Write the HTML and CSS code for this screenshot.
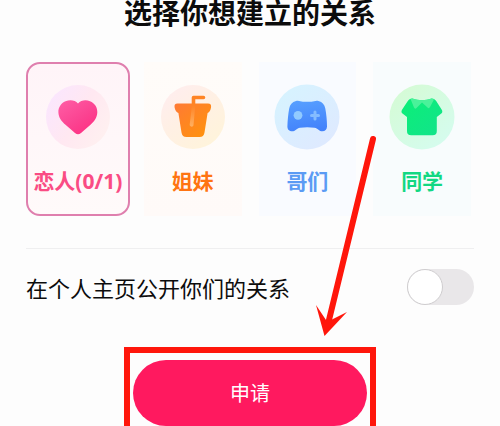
FILE: index.html
```html
<!DOCTYPE html>
<html lang="zh-CN">
<head>
<meta charset="utf-8">
<meta name="viewport" content="width=device-width, initial-scale=1">
<title>选择关系</title>
<link rel="stylesheet" href="styles.css">
</head>
<body>
<main class="page">
  <h1 class="title">选择你想建立的关系</h1>

  <div class="cards">
    <button type="button" class="card card-love" aria-pressed="true">
      <svg class="icon" viewBox="0 0 66 66" aria-hidden="true">
        <defs>
          <linearGradient id="love-bg" x1="0" y1="0.2" x2="1" y2="0.8"><stop offset="0" stop-color="#fae6ff"/><stop offset="0.5" stop-color="#ffe8f1"/><stop offset="1" stop-color="#fff1f0"/></linearGradient>
          <linearGradient id="love" x1="0" y1="0" x2="0.8" y2="1"><stop offset="0" stop-color="#ff5ea6"/><stop offset="0.6" stop-color="#fb4391"/><stop offset="1" stop-color="#ff2f82"/></linearGradient>
        </defs>
        <circle cx="33" cy="33" r="32" fill="url(#love-bg)"/>
        <path fill="url(#love)" d="M33 19.500C36 16 41 15.600 45 17.200C50 19.200 52.500 23.500 52.300 28.500C52 34 49 37.500 45.500 40.800L36 49C34 50.700 32 50.700 30 49L20.500 40.800C16.500 37.200 13.600 33.500 13.400 28.500C13.200 23.500 16 19.200 20.500 17.300C25 15.600 30 16 33 19.500Z"/>
      </svg>
      <span class="name">恋人(0/1)</span>
    </button>

    <button type="button" class="card card-sister" aria-pressed="false">
      <svg class="icon" viewBox="0 0 66 66" aria-hidden="true">
        <defs>
          <linearGradient id="sis-bg" x1="0" y1="0" x2="0.8" y2="1"><stop offset="0" stop-color="#ffedf1"/><stop offset="0.5" stop-color="#fff0e4"/><stop offset="1" stop-color="#fff4da"/></linearGradient>
          <linearGradient id="sis" x1="0" y1="0" x2="1" y2="1"><stop offset="0" stop-color="#ff7a35"/><stop offset="1" stop-color="#ff9409"/></linearGradient>
          <linearGradient id="straw" x1="0" y1="0" x2="0" y2="1"><stop offset="0" stop-color="#ff8324"/><stop offset="1" stop-color="#ffb061"/></linearGradient>
        </defs>
        <circle cx="33" cy="33" r="32" fill="url(#sis-bg)"/>
        <path fill="url(#sis)" d="M17.500 19.500H48C50.500 19.500 51.500 21 51 23.500C50.500 26.500 49.500 28.300 47.600 29L44.500 48.500C44 51.500 42.500 53 39.500 53H26.500C23.500 53 22 51.500 21.500 48.500L18.400 29C16.300 28.300 15.200 26.500 14.600 23.500C14.200 21 15 19.500 17.500 19.500Z"/>
        <path fill="none" stroke="#ff8424" stroke-width="3.600" stroke-linecap="round" stroke-linejoin="round" d="M33.500 21V13.500H43.500"/>
        <path fill="url(#straw)" d="M32 21H35.300L33.500 41C33.300 43.500 29.500 43 29.700 40.500Z"/>
      </svg>
      <span class="name">姐妹</span>
    </button>

    <button type="button" class="card card-brother" aria-pressed="false">
      <svg class="icon" viewBox="0 0 66 66" aria-hidden="true">
        <defs>
          <linearGradient id="bro-bg" x1="0" y1="0" x2="0.8" y2="1"><stop offset="0" stop-color="#d5f4ff"/><stop offset="1" stop-color="#dfe9ff"/></linearGradient>
          <linearGradient id="bro" x1="0.3" y1="0" x2="0.5" y2="1"><stop offset="0" stop-color="#579fff"/><stop offset="1" stop-color="#4382fb"/></linearGradient>
        </defs>
        <circle cx="33" cy="33" r="32.500" fill="url(#bro-bg)"/>
        <path fill="url(#bro)" d="M22 17C25 16.200 26.500 17.700 29 17.800H37.500C40 17.700 41.500 16.200 44.500 17C48.500 18 50.500 20.500 51.300 24.500C52.300 30 53 36 53 42.500C53 46 50.500 47.700 47.300 47.200C44.500 46.700 44 44.500 40.500 43.800C36 43 30.500 43 26 43.800C22.500 44.500 22 46.700 19.200 47.200C16 47.700 13.300 46 13.400 42.500C13.600 36 14.200 30 15.200 24.500C16 20.500 18 18 22 17Z"/>
        <circle cx="24" cy="31.300" r="4.400" fill="#91caff"/>
        <path fill="none" stroke="#84bcff" stroke-width="3" stroke-linecap="round" d="M37.500 31.500H44.500M41 28V35"/>
      </svg>
      <span class="name">哥们</span>
    </button>

    <button type="button" class="card card-classmate" aria-pressed="false">
      <svg class="icon" viewBox="0 0 66 66" aria-hidden="true">
        <defs>
          <linearGradient id="cls-bg" x1="0" y1="0" x2="0.8" y2="1"><stop offset="0" stop-color="#d5fbd2"/><stop offset="1" stop-color="#d5fcef"/></linearGradient>
          <linearGradient id="cls" x1="0" y1="0" x2="1" y2="1"><stop offset="0" stop-color="#0bef77"/><stop offset="1" stop-color="#12e38b"/></linearGradient>
        </defs>
        <circle cx="33" cy="33" r="32.500" fill="url(#cls-bg)"/>
        <path fill="url(#cls)" d="M23.500 14.500C29.500 16.700 36.500 16.700 42.500 14.500C44.500 14.200 46 15.500 47.200 17L52.600 25.500C53.800 27.500 53.500 28.700 52 29.800L47.800 33V47C47.800 50 46.500 51.300 43.500 51.300H22.300C19.300 51.300 18 50 18 47V33L13.800 29.800C12.300 28.700 12 27.500 13.200 25.500L18.800 17C20 15.500 21.500 14.200 23.500 14.500Z"/>
        <path fill="#4af29a" d="M23.500 14.500C29.500 16.700 36.500 16.700 42.500 14.500L45 15.500L41 23C40.300 24.300 39.500 24.500 38.500 23.500L33 18.500L27.500 24C26.500 25 25.600 24.800 25 23.500L21.500 15Z"/>
      </svg>
      <span class="name">同学</span>
    </button>
  </div>

  <div class="setting">
    <label class="setting-label" for="public">在个人主页公开你们的关系</label>
    <input class="switch" type="checkbox" role="switch" id="public">
  </div>

  <div class="highlight">
    <button type="button" class="apply">申请</button>
  </div>
</main>

<svg class="arrow" viewBox="0 0 66 202" aria-hidden="true">
  <path fill="none" stroke="#ff160b" stroke-width="6" stroke-linecap="round" d="M59 5L15 186"/>
  <path fill="#ff160b" d="M2 171L12 186H17L33 178L10.500 202Z"/>
</svg>
</body>
</html>
```
FILE: styles.css
```css
*,
*::before {
  box-sizing: border-box;
}

body {
  margin: 0;
  height: 100vh;
  overflow: hidden;
  background: #fdfdfd;
  color: #0c0c0c;
  font-family: "Noto Sans CJK SC", sans-serif;
}

button {
  margin: 0;
  border: 0;
  font-family: inherit;
  cursor: pointer;
}

.page {
  padding: 0 26px;
}

.title {
  margin: 0;
  height: 62px;
  font-size: 28px;
  font-weight: 700;
  line-height: 24px;
  text-align: center;
}

.cards {
  display: grid;
  grid-template-columns: repeat(4, minmax(0, 1fr));
  gap: 11px;
}

.card {
  display: flex;
  flex-direction: column;
  align-items: center;
  gap: 16px;
  margin: 0 3px;
  padding: 22px 0 20px;
}

.card[aria-pressed="true"] {
  margin: 0;
  padding: 20px 0 18px;
  border: 2px solid #df7fae;
  border-radius: 14px;
}

.icon {
  width: 66px;
  height: 66px;
}

.name {
  font-family: "Noto Sans", "Noto Sans CJK SC", sans-serif;
  font-size: 21px;
  font-weight: 700;
  line-height: 30px;
  white-space: nowrap;
}

.card-love {
  background: linear-gradient(#fff4f8, #fffafa);
  color: #fa4c84;
}

.card-sister {
  background: linear-gradient(#fffcf9, #fffaf8);
  color: #ff7412;
}

.card-brother {
  background: #f9fbff;
  color: #5b9bf4;
}

.card-classmate {
  background: #f8fcfd;
  color: #12d883;
}

.setting {
  display: flex;
  align-items: center;
  justify-content: space-between;
  margin-top: 32px;
  padding: 20px 0;
  border-top: 1px solid #efeff0;
}

.setting-label {
  font-size: 22px;
  line-height: 36px;
}

.switch {
  appearance: none;
  display: flex;
  width: 67px;
  height: 36px;
  margin: 0;
  border-radius: 18px;
  background: #e9e7e9;
  cursor: pointer;
}

.switch::before {
  content: "";
  width: 36px;
  height: 36px;
  border: 1px solid #cfcdcf;
  border-radius: 50%;
  background: #fff;
}

.switch:checked {
  justify-content: flex-end;
  background: #ff195f;
}

.highlight {
  width: 252px;
  max-width: 100%;
  margin: 22px auto 0;
  padding: 7px 3px;
  border: 6px solid #ff160b;
}

.apply {
  display: block;
  width: 100%;
  padding: 18px 0;
  border-radius: 33px;
  background: #ff195f;
  color: #fff;
  font-size: 20px;
  line-height: 30px;
}

.arrow {
  position: absolute;
  top: 134px;
  left: calc(50% + 64px);
  width: 66px;
  height: 202px;
  pointer-events: none;
}
```
